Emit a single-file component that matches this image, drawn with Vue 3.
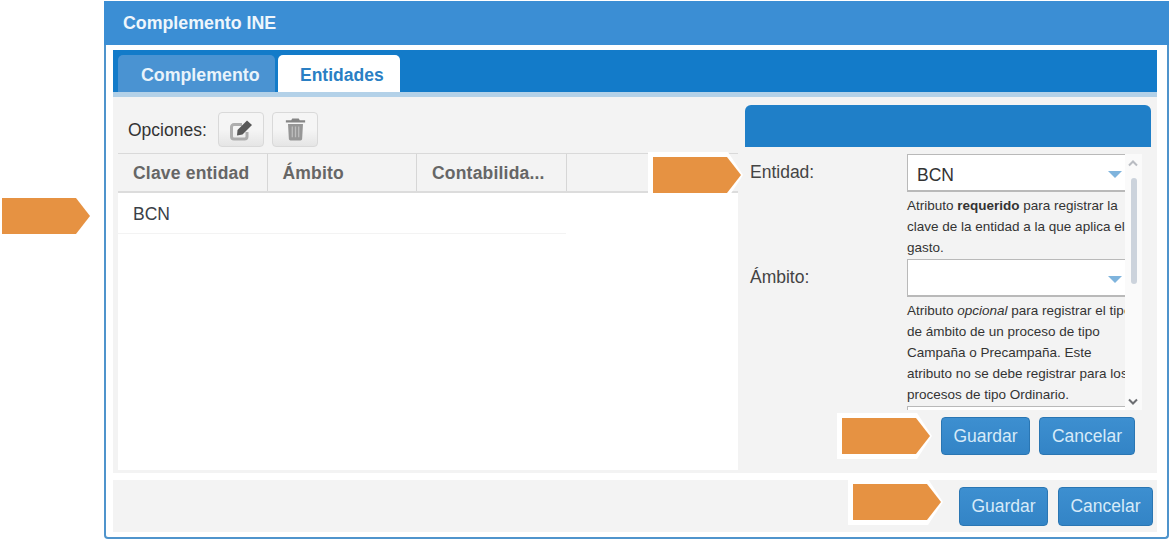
<script setup>
const columns = ["Clave entidad", "Ámbito", "Contabilida..."];
</script>

<template>
  <div class="page">
    <div class="window">
      <div class="title">Complemento INE</div>
      <div class="inner">
        <div class="tabs">
          <div class="tab">Complemento</div>
          <div class="tab active">Entidades</div>
        </div>
        <div class="content">
          <div class="left">
            <div class="options">
              <span class="opt-label">Opciones:</span>
              <button class="tool">
                <svg width="24" height="22" viewBox="0 0 24 22">
                  <path d="M13 5.500H5A2.500 2.500 0 0 0 2.500 8v9.500A2.500 2.500 0 0 0 5 20h10.500a2.500 2.500 0 0 0 2.500-2.500V13" fill="none" stroke="#aeaeae" stroke-width="3" />
                  <path d="M8.500 11 18 1.500 23 6l-9.500 9.500-5.500 1z" fill="#585858" />
                </svg>
              </button>
              <button class="tool">
                <svg width="21" height="23" viewBox="0.500 2 19 21.500">
                  <path d="M7 2.500h6l1 1.500h5v2.200H1V4h5z" fill="#858585" />
                  <path d="M3 7.500h14l-.8 14.200a1.500 1.500 0 0 1-1.500 1.300H5.300a1.500 1.500 0 0 1-1.500-1.300z" fill="#969696" />
                  <path d="M7 10v10M10 10v10M13 10v10" stroke="#bdbdbd" stroke-width="1.200" />
                </svg>
              </button>
            </div>
            <div class="thead">
              <div v-for="c in columns" :key="c" class="th">{{ c }}</div>
            </div>
            <div class="tbody">
              <div class="tr">BCN</div>
            </div>
          </div>
          <div class="right">
            <div class="panel-head"></div>
            <div class="scroll-wrap">
              <div class="form">
                <div class="field">
                  <label>Entidad:</label>
                  <div class="control">
                    <div class="select">BCN<i class="caret"></i></div>
                    <p class="help">Atributo <b>requerido</b> para registrar la clave de la entidad a la que aplica el gasto.</p>
                  </div>
                </div>
                <div class="field">
                  <label>Ámbito:</label>
                  <div class="control">
                    <div class="select"><i class="caret"></i></div>
                    <p class="help">Atributo <em>opcional</em> para registrar el tipo de ámbito de un proceso de tipo Campaña o Precampaña. Este atributo no se debe registrar para los procesos de tipo Ordinario.</p>
                  </div>
                </div>
                <div class="field">
                  <label></label>
                  <div class="control"><div class="select"></div></div>
                </div>
              </div>
              <div class="scrollbar">
                <svg class="sb-arrow" width="10" height="7" viewBox="0 0 10 7"><path d="M1 5.500 5 1.500l4 4" fill="none" stroke="#b9bcc2" stroke-width="2" /></svg>
                <div class="thumb"></div>
                <svg class="sb-arrow low" width="10" height="7" viewBox="0 0 10 7"><path d="M1 1.500l4 4 4-4" fill="none" stroke="#6d6f73" stroke-width="2" /></svg>
              </div>
            </div>
            <div class="panel-actions">
              <button class="btn">Guardar</button>
              <button class="btn">Cancelar</button>
            </div>
          </div>
        </div>
        <div class="footer">
          <button class="btn tall">Guardar</button>
          <button class="btn tall">Cancelar</button>
        </div>
      </div>
    </div>

    <div class="callout c1"><span></span></div>
    <div class="callout c2"><span></span></div>
    <div class="callout c3"><span></span></div>
    <div class="callout c4"><span></span></div>
  </div>
</template>

<style>
html,
body {
  margin: 0;
  background: #fff;
}
</style>

<style scoped>
.page {
  position: relative;
  width: 1170px;
  height: 539px;
  overflow: hidden;
  padding: 1px 0 0 104px;
  box-sizing: border-box;
  background: #fff;
  font-family: "Liberation Sans", Arial, sans-serif;
  color: #333;
}

.window {
  width: 1065px;
  height: 538px;
  box-sizing: border-box;
  border: 2px solid #4f94cc;
  border-top: 0;
  border-radius: 0 0 4px 4px;
  background: #fff;
}

.title {
  height: 44px;
  margin: 0 -2px;
  padding: 12px 0 0 19px;
  box-sizing: border-box;
  background: #3b8ed4;
  color: #eef6fc;
  font-size: 17.800px;
  font-weight: bold;
}

.inner {
  padding: 5px 10px 0 7px;
}

.tabs {
  height: 42px;
  display: flex;
  align-items: flex-end;
  gap: 3px;
  padding-left: 5px;
  background: #137bc9;
}

.tab {
  height: 37px;
  width: 157px;
  box-sizing: border-box;
  padding: 10px 0 0 23px;
  border-radius: 5px 5px 0 0;
  background: #4a93d2;
  color: #e9f3fb;
  font-size: 17.800px;
  font-weight: bold;
}

.tab.active {
  width: 122px;
  padding-left: 22px;
  background: #fff;
  color: #2a7fc4;
  font-size: 17.500px;
}

.content {
  height: 381px;
  display: flex;
  gap: 7px;
  padding-left: 5px;
  border-top: 5px solid #b3d1e8;
  box-sizing: border-box;
  background: #f3f3f3;
}

.left {
  width: 620px;
  display: flex;
  flex-direction: column;
}

.options {
  height: 56px;
  box-sizing: border-box;
  padding: 15px 0 0 10px;
  display: flex;
  gap: 8px;
}

.opt-label {
  width: 82px;
  padding-top: 8px;
  font-size: 17.500px;
  color: #333;
}

.tool {
  width: 46px;
  height: 35px;
  padding: 0;
  display: flex;
  align-items: center;
  justify-content: center;
  border: 1px solid #d9d9d9;
  border-radius: 4px;
  background: linear-gradient(#f5f5f5 50%, #e5e5e5);
}

.thead {
  height: 40px;
  display: flex;
  border-top: 1px solid #d9d9d9;
  border-bottom: 2px solid #dcdcdc;
  box-sizing: border-box;
}

.th {
  width: 149.500px;
  box-sizing: border-box;
  padding: 9px 0 0 15px;
  border-right: 1px solid #d6d6d6;
  font-size: 17.500px;
  font-weight: bold;
  letter-spacing: 0.200px;
  color: #666;
}

.tbody {
  height: 277px;
  background: #fff;
}

.tr {
  width: 448px;
  height: 41px;
  box-sizing: border-box;
  padding: 11px 0 0 15px;
  border-bottom: 1px solid #f3f3f3;
  font-size: 17.500px;
  color: #3a3f47;
}

.right {
  width: 406px;
  display: flex;
  flex-direction: column;
  padding-top: 8px;
}

.panel-head {
  height: 42px;
  border-radius: 6px 6px 0 0;
  background: #1f7fc8;
}

.scroll-wrap {
  position: relative;
  width: 397px;
  height: 256px;
  margin-top: 7px;
  overflow: hidden;
}

.form {
  width: 380px;
  height: 256px;
  overflow: hidden;
  padding-left: 5px;
  box-sizing: border-box;
}

.field {
  display: flex;
}

.field label {
  width: 157px;
  flex: none;
  padding-top: 8px;
  font-size: 17.500px;
  color: #444;
}

.control {
  width: 232px;
  flex: none;
}

.select {
  position: relative;
  height: 38px;
  box-sizing: border-box;
  padding: 10px 0 0 9px;
  border: 1px solid #b9b9b9;
  border-bottom-width: 2px;
  background: #fff;
  font-size: 17.500px;
  color: #333;
}

.caret {
  position: absolute;
  left: 200px;
  top: 16px;
  width: 0;
  height: 0;
  border-left: 7px solid transparent;
  border-right: 7px solid transparent;
  border-top: 7px solid #7fb4dd;
}

.help {
  margin: 3px 0 1px;
  width: 231px;
  font-size: 13.500px;
  line-height: 21px;
  color: #333;
}

.scrollbar {
  position: absolute;
  left: 380px;
  top: 0;
  width: 17px;
  height: 256px;
  background: #fafafa;
}

.thumb {
  position: absolute;
  left: 6px;
  top: 24px;
  width: 6px;
  height: 106px;
  border-radius: 3px;
  background: #ccd3dc;
}

.sb-arrow {
  position: absolute;
  left: 3px;
  top: 6px;
}

.sb-arrow.low {
  top: 244px;
}

.panel-actions {
  display: flex;
  justify-content: flex-end;
  gap: 9px;
  padding: 7px 16px 0 0;
}

.btn {
  width: 89px;
  height: 38px;
  padding: 0;
  border: 1px solid #2a76b3;
  border-radius: 4px;
  background: linear-gradient(#3d8fd0, #3384c6);
  color: #d6eaf8;
  font-family: inherit;
  font-size: 17.500px;
}

.btn:last-child {
  width: 96px;
}

.footer {
  height: 52px;
  margin-top: 7px;
  display: flex;
  justify-content: flex-end;
  align-items: flex-start;
  gap: 10px;
  padding: 7px 4px 0 0;
  box-sizing: border-box;
  background: #f3f3f3;
}

.btn.tall {
  height: 39px;
}

.btn.tall:last-child {
  width: 95px;
}

.callout {
  position: absolute;
  background: #fff;
  width: 95px;
  height: 46px;
  clip-path: polygon(0 0, 80px 0, 100% 50%, 80px 100%, 0 100%);
}

.callout span {
  position: absolute;
  left: 5px;
  top: 5px;
  width: 88px;
  height: 36px;
  background: #e69242;
  clip-path: polygon(0 0, 74px 0, 100% 50%, 74px 100%, 0 100%);
}

.c1 { left: -3px; top: 193px; }
.c2 { left: 648px; top: 152px; }
.c3 { left: 837px; top: 413px; }
.c4 { left: 848px; top: 479px; }
</style>
